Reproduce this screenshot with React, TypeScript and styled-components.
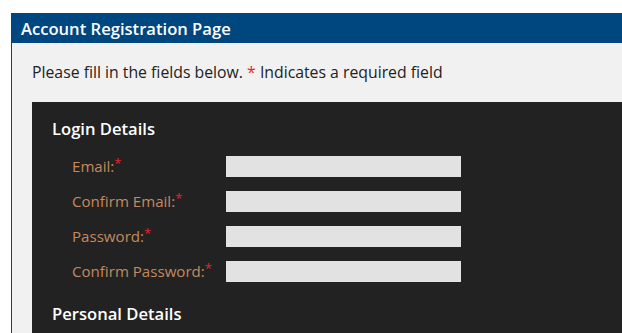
import styled, { createGlobalStyle } from 'styled-components'

const GlobalStyle = createGlobalStyle`
  html, body {
    margin: 0;
    padding: 0;
    background: #fff;
    overflow: hidden;
  }
  body {
    font-family: 'Open Sans', 'Noto Sans', sans-serif;
  }
`

const fields = [
  { label: 'Email:', type: 'email' },
  { label: 'Confirm Email:', type: 'email' },
  { label: 'Password:', type: 'password' },
  { label: 'Confirm Password:', type: 'password' },
]

export default function App() {
  return (
    <>
      <GlobalStyle />
      <Page>
        <Panel>
          <Header>Account Registration Page</Header>
          <Content>
            <Intro>
              Please fill in the fields below. <Req>*</Req> Indicates a required field
            </Intro>
            <Form>
              <SectionTitle>Login Details</SectionTitle>
              <Fields>
                {fields.map((f) => (
                  <Row key={f.label}>
                    <Label>
                      {f.label}
                      <Req small>*</Req>
                    </Label>
                    <Input type={f.type} />
                  </Row>
                ))}
              </Fields>
              <SectionTitle spaced>Personal Details</SectionTitle>
            </Form>
          </Content>
        </Panel>
      </Page>
    </>
  )
}

const Page = styled.div`
  box-sizing: border-box;
  padding: 13px 0 0 11px;
  height: 333px;
`

const Panel = styled.div`
  display: flex;
  flex-direction: column;
  height: 100%;
  border-left: 1px solid #3a3a3a;
`

const Header = styled.div`
  height: 30px;
  line-height: 31px;
  margin-left: -1px;
  padding-left: 10px;
  background-color: #00467f;
  color: #fff;
  font-size: 16.6px;
  font-weight: 600;
`

const Content = styled.div`
  flex: 1;
  display: flex;
  flex-direction: column;
  background-color: #f1f1f1;
  padding: 19px 0 0 20px;
`

const Intro = styled.p`
  margin: 0 0 20px;
  line-height: 20px;
  font-size: 15.8px;
  color: #222;
`

const Req = styled.span<{ small?: boolean }>`
  color: #e8232b;
  font-size: ${(p) => (p.small ? '13px' : 'inherit')};
  vertical-align: ${(p) => (p.small ? 'top' : 'baseline')};
  line-height: ${(p) => (p.small ? '14px' : 'inherit')};
`

const Form = styled.div`
  flex: 1;
  background-color: #222;
  padding: 15px 0 0 20px;
`

const SectionTitle = styled.h3<{ spaced?: boolean }>`
  margin: ${(p) => (p.spaced ? '20px 0 0' : '0')};
  line-height: 24px;
  font-size: 16.6px;
  font-weight: 600;
  color: #fff;
`

const Fields = styled.div`
  display: flex;
  flex-direction: column;
  gap: 14px;
  margin-top: 15px;
  padding-left: 20px;
`

const Row = styled.div`
  display: grid;
  grid-template-columns: 154px 235px;
  align-items: center;
`

const Label = styled.label`
  font-size: 15.1px;
  line-height: 21px;
  color: #c48a5e;
`

const Input = styled.input`
  box-sizing: border-box;
  width: 235px;
  height: 21px;
  margin: 0;
  padding: 0 4px;
  border: none;
  background-color: #e2e2e2;
  outline: none;
`
